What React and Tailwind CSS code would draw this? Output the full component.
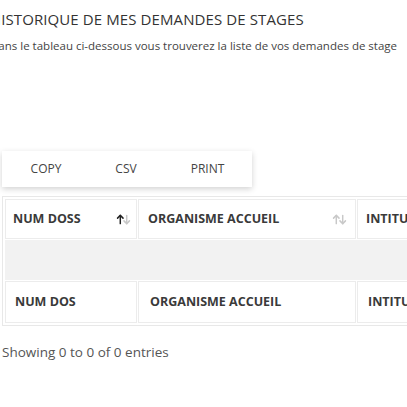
import React from 'react';

function SortIcon({ active }) {
  return (
    <svg width="15" height="11" viewBox="0 0 16 12" fill="none" strokeWidth="1.6" strokeLinecap="round" strokeLinejoin="round">
      <g stroke={active ? '#222' : '#c8c8c8'}>
        <path d="M4.5 10.5V1.5" />
        <path d="M1.5 4.5L4.5 1.5L7.5 4.5" />
      </g>
      <g stroke="#c8c8c8">
        <path d="M11.5 1.5V10.5" />
        <path d="M8.5 7.5L11.5 10.5L14.5 7.5" />
      </g>
    </svg>
  );
}

function App() {
  const font = { fontFamily: '"Open Sans", "Liberation Sans", sans-serif' };

  return (
    <div className="w-[407px] h-[407px] overflow-hidden bg-white" style={font}>
      {/* Page Header */}
      <div className="ml-[-10px] pt-[9px]">
        <h1 className="text-[15px] leading-[20px] text-[#333] tracking-[0.1px]">
          HISTORIQUE DE MES DEMANDES DE STAGES
        </h1>
        <p className="mt-[8px] text-[11.5px] leading-[17px] text-[#444]">
          Dans le tableau ci-dessous vous trouverez la liste de vos demandes de stage
        </p>
      </div>

      {/* Export buttons */}
      <div className="ml-[2px] mt-[97px] w-[250px] h-[36px] flex items-center bg-white shadow-[0_2px_6px_rgba(0,0,0,0.18)]">
        <button className="w-[88px] text-[12px] text-[#444] text-center">COPY</button>
        <button className="w-[72px] text-[12px] text-[#444] text-center">CSV</button>
        <button className="w-[84px] text-[12px] text-[#444] text-center pl-[7px]">PRINT</button>
      </div>

      {/* Table */}
      <div className="ml-[2px] mt-[9px] w-[600px] border border-[#e8e8e8] p-[1px]">
        <table className="border-separate border-spacing-[1px] w-full text-[12.5px] font-extrabold text-[#3a3a3a]">
          <thead>
            <tr>
              <th className="w-[132px] h-[40px] border border-[#ececec] text-left pl-[7px] pr-[5px]">
                <div className="flex items-center justify-between">
                  <span>NUM DOSS</span>
                  <SortIcon active />
                </div>
              </th>
              <th className="w-[218px] h-[40px] border border-[#ececec] text-left pl-[9px] pr-[8px]">
                <div className="flex items-center justify-between">
                  <span>ORGANISME ACCUEIL</span>
                  <SortIcon />
                </div>
              </th>
              <th className="h-[40px] border border-[#ececec] text-left px-[8px]">INTITULÉ DU STAGE</th>
            </tr>
          </thead>
          <tbody>
            <tr>
              <td colSpan={3} className="h-[40px] bg-[#f2f2f2]"></td>
            </tr>
          </tbody>
          <tfoot>
            <tr>
              <th className="h-[42px] border border-[#ececec] text-left px-[9px]">NUM DOS</th>
              <th className="h-[42px] border border-[#ececec] text-left px-[11px]">ORGANISME ACCUEIL</th>
              <th className="h-[42px] border border-[#ececec] text-left px-[10px]">INTITULÉ DU STAGE</th>
            </tr>
          </tfoot>
        </table>
      </div>

      <p className="ml-[2px] mt-[16px] text-[13.5px] text-[#555]">Showing 0 to 0 of 0 entries</p>
    </div>
  );
}

export default App;
